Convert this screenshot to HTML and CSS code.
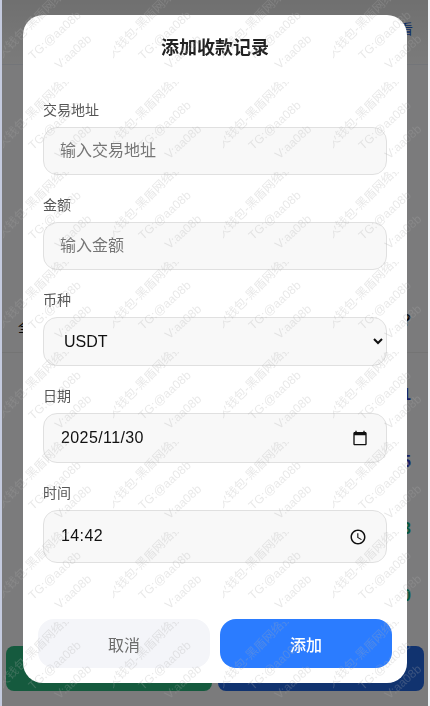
FILE: index.html
```html
<!DOCTYPE html>
<html lang="zh-CN">

<head>
    <meta charset="UTF-8">
    <meta name="viewport" content="width=device-width, initial-scale=1.0">
    <title>添加收款记录</title>
    <link rel="stylesheet" href="styles.css">
</head>

<body>
    <div class="page">
        <div class="page-header">
            <a class="header-link">查看</a>
        </div>

        <div class="summary-row">
            <span class="summary-label">全部</span>
            <span class="summary-count">?</span>
        </div>

        <div class="record-list">
            <div class="record-item amount-blue">1</div>
            <div class="record-item amount-blue">5</div>
            <div class="record-item amount-green">3</div>
            <div class="record-item amount-green">0</div>
        </div>

        <div class="page-actions">
            <button class="action-button action-green"></button>
            <button class="action-button action-blue"></button>
        </div>
    </div>

    <div class="modal-overlay">
        <div class="modal">
            <h2 class="modal-title">添加收款记录</h2>

            <div class="modal-body">
                <div class="form-group">
                    <label for="txAddress">交易地址</label>
                    <input class="field" type="text" id="txAddress" placeholder="输入交易地址">
                </div>
                <div class="form-group">
                    <label for="txAmount">金额</label>
                    <input class="field" type="text" id="txAmount" placeholder="输入金额">
                </div>
                <div class="form-group">
                    <label for="txCoin">币种</label>
                    <select class="field coin-select" id="txCoin">
                        <option>USDT</option>
                        <option>TRX</option>
                    </select>
                </div>
                <div class="form-group">
                    <label for="txDate">日期</label>
                    <div class="field picker date-picker">
                        <input type="text" id="txDate" value="2025/11/30">
                        <svg width="16" height="16" viewBox="0 0 24 24">
                            <path d="M20 3h-1V1h-2v2H7V1H5v2H4c-1.1 0-2 .9-2 2v16c0 1.1.9 2 2 2h16c1.1 0 2-.9 2-2V5c0-1.1-.9-2-2-2zm0 18H4V8h16v13z" />
                        </svg>
                    </div>
                </div>
                <div class="form-group">
                    <label for="txTime">时间</label>
                    <div class="field picker time-picker">
                        <input type="text" id="txTime" value="14:42">
                        <svg width="18" height="18" viewBox="0 0 24 24">
                            <path d="M11.99 2C6.47 2 2 6.48 2 12s4.47 10 9.99 10C17.52 22 22 17.52 22 12S17.52 2 11.99 2zM12 20c-4.42 0-8-3.58-8-8s3.58-8 8-8 8 3.58 8 8-3.58 8-8 8zm.5-13H11v6l5.25 3.15.75-1.23-4.5-2.67z" />
                        </svg>
                    </div>
                </div>
            </div>

            <div class="modal-footer">
                <button class="cancel-button">取消</button>
                <button class="submit-button">添加</button>
            </div>
        </div>
    </div>

    <svg class="watermark" xmlns="http://www.w3.org/2000/svg">
        <defs>
            <pattern id="watermarkTile" x="3" y="-8" width="110" height="90" patternUnits="userSpaceOnUse">
                <text transform="translate(38.8 26.8) rotate(-45)" text-anchor="middle">火钱包-黑盾网络技术</text>
                <text transform="translate(54.3 46.3) rotate(-42)" text-anchor="middle">TG:@aa08b</text>
                <text transform="translate(72.8 62.8) rotate(-42)" text-anchor="middle">V:aa08b</text>
            </pattern>
        </defs>
        <rect width="100%" height="100%" fill="url(#watermarkTile)" />
    </svg>
</body>

</html>
```

FILE: styles.css
```css
* {
    box-sizing: border-box;
}

body {
    margin: 0;
    font-family: "Liberation Sans", "Noto Sans CJK SC", sans-serif;
    background-color: #f0f4f8;
    color: #333;
}

.page {
    height: 706px;
    margin-left: 2px;
    margin-right: 2px;
    display: flex;
    flex-direction: column;
    overflow: hidden;
    background-color: #f6f6f8;
    box-shadow: -2px 0 0 #c4cade;
}

.page-header {
    height: 65px;
    flex-shrink: 0;
    padding: 18px 15px 0 0;
    text-align: right;
    background: linear-gradient(#e0e0e0, #f6f6f6);
    border-bottom: 1px solid #e6eaf2;
}

.header-link {
    font-size: 14px;
    color: #1a56c4;
}

.summary-row {
    height: 50px;
    flex-shrink: 0;
    margin-top: 237px;
    padding: 0 17px 0 16px;
    display: flex;
    justify-content: space-between;
    font-size: 14px;
    line-height: 50px;
    color: #111;
}

.summary-count {
    font-size: 16px;
    font-weight: bold;
    line-height: 38px;
}

.record-list {
    flex: 1;
    min-height: 0;
    overflow: hidden;
    padding: 33px 17px 0 0;
    border-top: 1px solid #e8e8e8;
}

.record-item {
    height: 67px;
    text-align: right;
    font-size: 16px;
    font-weight: bold;
}

.amount-blue {
    color: #2a3fc8;
}

.amount-green {
    color: #0fae7a;
}

.page-actions {
    display: flex;
    flex-shrink: 0;
    gap: 6px;
    padding: 0 4px 15px;
}

.action-button {
    flex: 1;
    height: 45px;
    border: none;
    border-radius: 8px;
}

.action-green {
    background-color: #2ab47c;
}

.action-blue {
    background-color: #2366de;
}

.modal-overlay {
    position: fixed;
    top: 0;
    bottom: 0;
    left: 2px;
    right: 2px;
    padding: 15px 21px 23px;
    background-color: rgba(0, 0, 0, 0.5);
}

.modal {
    height: 100%;
    background-color: white;
    border-radius: 20px;
    overflow: hidden;
}

.modal-title {
    margin: 0;
    padding-top: 21px;
    height: 85px;
    text-align: center;
    font-size: 18px;
    line-height: 24px;
    font-weight: bold;
    color: #222;
}

.modal-body {
    padding: 0 20px;
    height: 519px;
}

.form-group {
    margin-bottom: 20px;
}

.form-group label {
    display: block;
    font-size: 14px;
    line-height: 20px;
    margin-bottom: 7px;
    color: #555;
}

.field {
    display: block;
    width: 100%;
    height: 48px;
    padding: 0 16px;
    border: 1px solid #e0e0e0;
    border-radius: 14px;
    background-color: #f8f8f8;
    font-family: inherit;
    font-size: 16px;
    color: #111;
}

.coin-select {
    height: 49px;
}

.picker {
    display: flex;
    align-items: center;
    padding-left: 17px;
}

.picker input {
    flex: 1;
    min-width: 0;
    padding: 0;
    border: none;
    outline: none;
    background: none;
    font-family: inherit;
    font-size: 16px;
    letter-spacing: 0.4px;
    color: #111;
}

.date-picker {
    height: 50px;
    padding-right: 18px;
}

.time-picker {
    height: 53px;
    padding-right: 19px;
}

.time-picker input {
    margin-bottom: 2px;
}

.picker svg {
    flex-shrink: 0;
    fill: #111;
}

.modal-footer {
    display: grid;
    grid-template-columns: 1fr 1fr;
    gap: 10px;
    padding: 0 15px;
}

.cancel-button,
.submit-button {
    height: 49px;
    border: none;
    border-radius: 16px;
    font-family: inherit;
    font-size: 16px;
}

.cancel-button {
    background-color: #f4f5f9;
    color: #6b6b6b;
}

.submit-button {
    background-color: #2b7cff;
    color: white;
    font-weight: 500;
}

.watermark {
    position: fixed;
    top: 0;
    left: 0;
    width: 100%;
    height: 100%;
    pointer-events: none;
}

.watermark text {
    font-size: 12px;
    fill: rgba(170, 170, 170, 0.27);
}
```
